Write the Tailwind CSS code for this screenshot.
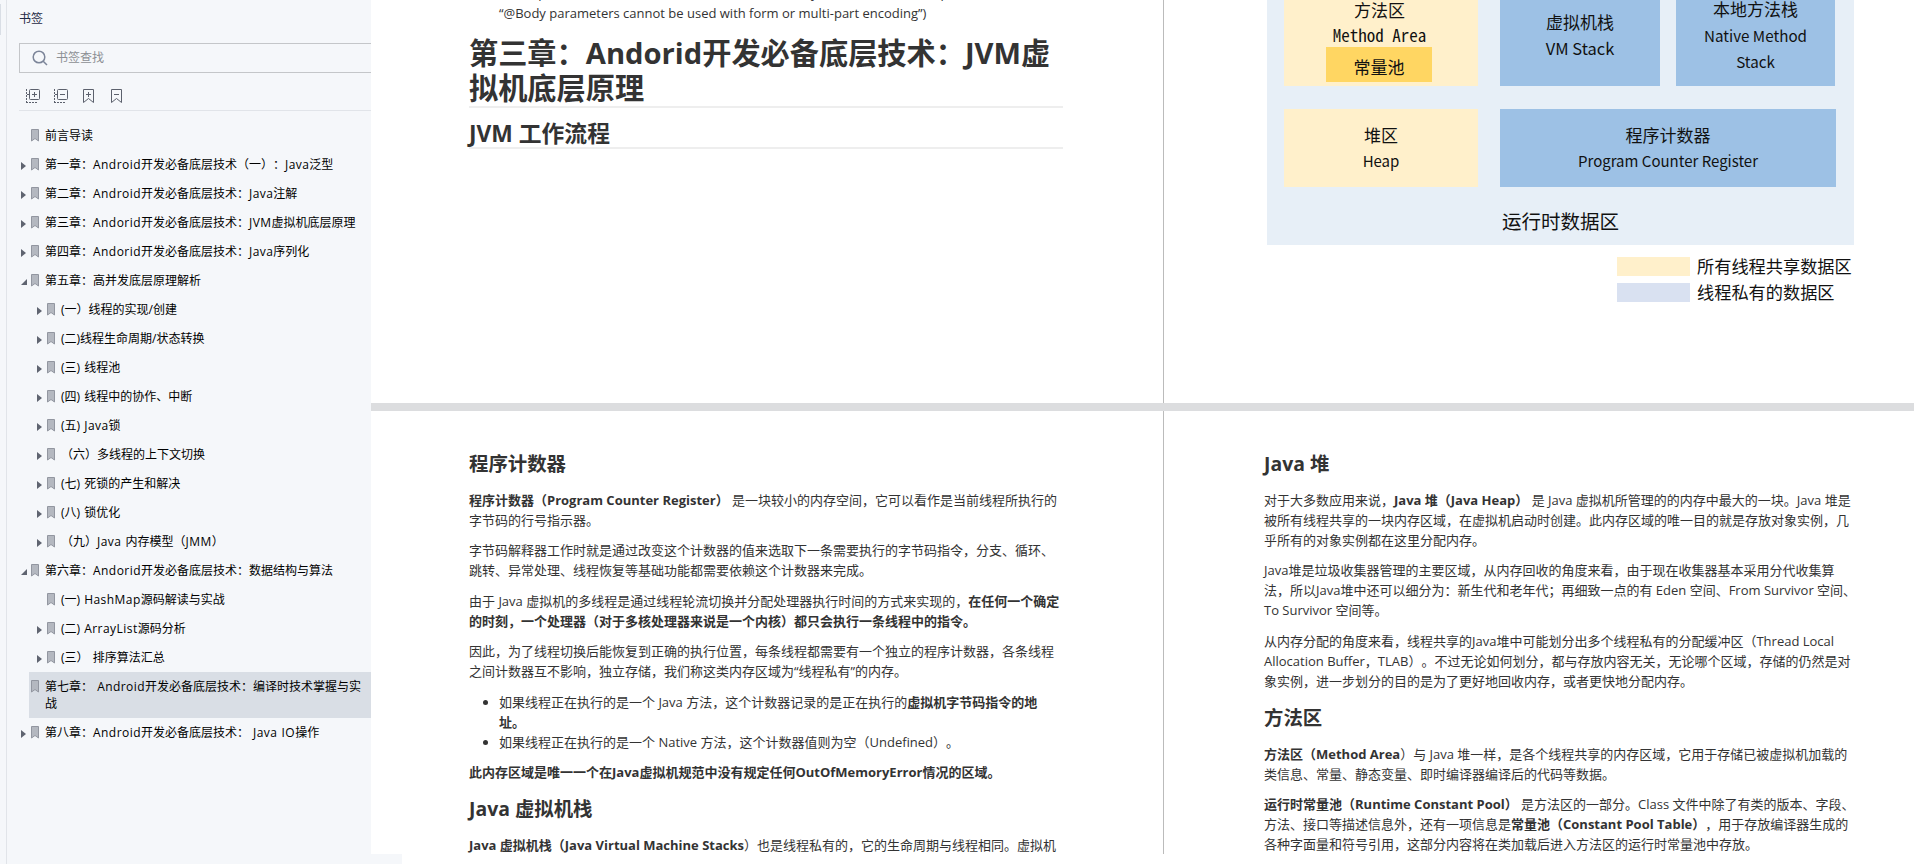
<!DOCTYPE html>
<html lang="zh-CN">
<head>
  <meta charset="UTF-8" />
  <meta name="viewport" content="width=device-width, initial-scale=1.0" />
  <title>Android开发必备底层技术</title>
  <script src="https://cdn.jsdelivr.net/npm/@tailwindcss/browser@4"></script>
</head>
<body class="h-[864px] overflow-hidden bg-white font-['Open_Sans','Noto_Sans_CJK_SC',sans-serif] [text-spacing-trim:space-all]">

  <!-- Icons -->
  <svg class="hidden">
    <symbol id="mark" viewBox="0 0 8 13"><path d="M.5 .5h7v11.500L4 9.500.5 12z" fill="#b4b8c0" stroke="#9296a0" /></symbol>
    <symbol id="closed" viewBox="0 0 5 8"><path d="M0 0 5 4 0 8z" fill="#5f6470" /></symbol>
    <symbol id="open" viewBox="0 0 6 6"><path d="M6 0v6H0z" fill="#5f6470" /></symbol>
  </svg>

  <div class="flex h-[854px]">
    <!-- Bookmarks panel -->
    <aside class="flex h-[864px] w-[371px] shrink-0 bg-[#f5f7fa]">
      <div class="w-[7px] shrink-0 border-r border-[#e1e4e9] pt-1"><div class="h-[31px] w-px bg-[#d9dee5]"></div></div>
      <div class="flex-1 pl-3 text-xs text-black">
        <h2 class="pt-[10px] leading-[18px] text-[#1f2a44]">书签</h2>
        <div class="mt-[15px] flex h-[30px] items-center border border-r-0 border-[#c4c6c9] pl-3 text-[#8c8f94]">
          <svg class="mr-2 size-4" viewBox="0 0 16 16" fill="none" stroke="#7c8599" stroke-width="1.5"><circle cx="7" cy="7" r="5.8" /><path d="m11.2 11.2 3.8 3.800" /></svg>
          书签查找
        </div>
        <div class="flex h-[38px] items-center gap-[13px] border-b border-[#e1e4e9] pt-[15px] pb-[7px] pl-[6px]">
          <svg class="size-[15px]" viewBox="0 0 15 15" fill="none" stroke="#5c616d"><rect x="4.5" y="1.5" width="10" height="10" rx="1" /><path d="M7 6.500h5M9.500 4v5M2 6.500h2" /><path d="M1.500 1v14M1 14.500h11" stroke-dasharray="2 1" /></svg>
          <svg class="size-[15px]" viewBox="0 0 15 15" fill="none" stroke="#5c616d"><rect x="4.5" y="1.5" width="10" height="10" rx="1" /><path d="M7 6.500h5M2 6.500h2" /><path d="M1.500 1v14M1 14.500h11" stroke-dasharray="2 1" /></svg>
          <svg class="size-[15px]" viewBox="0 0 15 15" fill="none" stroke="#5c616d"><path d="M2.500 1.500h10V14.500L7.500 10.500 2.500 14.500zM5 6.500h5M7.500 4v5" /></svg>
          <svg class="size-[15px]" viewBox="0 0 15 15" fill="none" stroke="#5c616d"><path d="M2.500 1.500h10V14.500L7.500 10.500 2.500 14.500zM5 6.500h5" /></svg>
        </div>
        <ul id="tree" class="pt-[10px] whitespace-pre [word-spacing:1px]"></ul>
      </div>
    </aside>

    <!-- Document, two pages side by side -->
    <main class="grid h-[854px] w-[1543px] grid-cols-[792px_1fr] grid-rows-[403px_443px] gap-y-2 overflow-hidden bg-[#dcdddf] text-[13px] leading-5 text-[#333]">
      <section class="overflow-hidden bg-white pl-[98px]">
        <div class="-mt-[17px] pl-[30px] whitespace-nowrap">throw parameterError(method, i, annotation of body, for a form or multi-part method<br />“@Body parameters cannot be used with form or multi-part encoding”)</div>
        <h1 class="mt-[13px] w-[594px] border-b-2 border-[#eee] text-[29.2px] leading-[35px] font-bold whitespace-nowrap">第三章：Andorid开发必备底层技术：JVM虚<br />拟机底层原理</h1>
        <h2 class="mt-[12px] w-[594px] border-b-2 border-[#eee] text-[22.8px] leading-[27px] font-bold">JVM 工作流程</h2>
      </section>

      <section class="overflow-hidden border-l border-[#bbb] bg-white pl-[103px]">
        <div class="h-[245px] w-[587px] bg-[#e7eff7] px-[17px] font-['Noto_Sans_CJK_SC',sans-serif] text-[17px] leading-[26px] text-[#111]">
          <div class="flex h-[86px] text-center">
            <div class="w-[194px] bg-[#fff0cb]">
              <div class="-mt-[3px] pr-[3px]">方法区</div>
              <div class="pr-[3px] font-['Noto_Sans_Mono_CJK_SC','Noto_Sans_CJK_SC',monospace] leading-6">Method Area</div>
              <div class="ml-[42px] h-[35px] w-[106px] bg-[#ffd662] leading-[40px]">常量池</div>
            </div>
            <div class="ml-[22px] w-[160px] bg-[#9dc1e5] pt-[9px]">虚拟机栈<div class="text-[16.5px]">VM Stack</div></div>
            <div class="ml-4 w-[159px] bg-[#9dc1e5]"><div class="-mt-[4px]">本地方法栈<div class="text-[15.2px]">Native Method<br />Stack</div></div></div>
          </div>
          <div class="mt-[23px] flex h-[78px] text-center">
            <div class="w-[194px] bg-[#fff0cb] pt-[13px]">堆区<div class="text-[15px]">Heap</div></div>
            <div class="ml-[22px] w-[336px] bg-[#9dc1e5] pt-[13px]">程序计数器<div class="text-[15px]">Program Counter Register</div></div>
          </div>
          <div class="pt-[21px] text-center text-[19.5px]">运行时数据区</div>
        </div>
        <div class="w-[587px] pt-[8px] pl-[350px] font-['Noto_Sans_CJK_SC',sans-serif] text-[17.2px] leading-[26px] text-[#111]">
          <div class="flex items-center gap-[7px] whitespace-nowrap"><span class="h-[19px] w-[73px] bg-[#fff0cb]"></span>所有线程共享数据区</div>
          <div class="flex items-center gap-[7px] whitespace-nowrap"><span class="h-[19px] w-[73px] bg-[#d9e1f1]"></span>线程私有的数据区</div>
        </div>
      </section>

      <section class="overflow-hidden bg-white pt-[39px] pl-[98px] whitespace-nowrap">
        <h3 class="text-[19.4px] leading-[27px] font-bold">程序计数器</h3>
        <p class="mt-[12.5px]"><b>程序计数器（Program Counter Register）</b> 是一块较小的内存空间，它可以看作是当前线程所执行的<br />字节码的行号指示器。</p>
        <p class="mt-[10.5px]">字节码解释器工作时就是通过改变这个计数器的值来选取下一条需要执行的字节码指令，分支、循环、<br />跳转、异常处理、线程恢复等基础功能都需要依赖这个计数器来完成。</p>
        <p class="mt-[10.5px]">由于 Java 虚拟机的多线程是通过线程轮流切换并分配处理器执行时间的方式来实现的，<b>在任何一个确定<br />的时刻，一个处理器（对于多核处理器来说是一个内核）都只会执行一条线程中的指令。</b></p>
        <p class="mt-[10.5px]">因此，为了线程切换后能恢复到正确的执行位置，每条线程都需要有一个独立的程序计数器，各条线程<br />之间计数器互不影响，独立存储，我们称这类内存区域为“线程私有”的内存。</p>
        <ul class="mt-[10.5px] list-disc pl-[30px]">
          <li>如果线程正在执行的是一个 Java 方法，这个计数器记录的是正在执行的<b>虚拟机字节码指令的地<br />址。</b></li>
          <li>如果线程正在执行的是一个 Native 方法，这个计数器值则为空（Undefined）。</li>
        </ul>
        <p class="mt-[10px]"><b>此内存区域是唯一一个在Java虚拟机规范中没有规定任何OutOfMemoryError情况的区域。</b></p>
        <h3 class="mt-[13px] text-[19.4px] leading-[27px] font-bold">Java 虚拟机栈</h3>
        <p class="mt-[13px]"><b>Java 虚拟机栈（Java Virtual Machine Stacks</b>）也是线程私有的，它的生命周期与线程相同。虚拟机</p>
      </section>

      <section class="overflow-hidden border-l border-[#bbb] bg-white pt-[39px] pl-[100px] whitespace-nowrap">
        <h3 class="text-[19.4px] leading-[27px] font-bold">Java 堆</h3>
        <p class="mt-[12.5px]">对于大多数应用来说，<b>Java 堆（Java Heap）</b> 是 Java 虚拟机所管理的的内存中最大的一块。Java 堆是<br />被所有线程共享的一块内存区域，在虚拟机启动时创建。此内存区域的唯一目的就是存放对象实例，几<br />乎所有的对象实例都在这里分配内存。</p>
        <p class="mt-[10.5px]">Java堆是垃圾收集器管理的主要区域，从内存回收的角度来看，由于现在收集器基本采用分代收集算<br />法，所以Java堆中还可以细分为：新生代和老年代；再细致一点的有 Eden 空间、From Survivor 空间、<br />To Survivor 空间等。</p>
        <p class="mt-[10.5px]">从内存分配的角度来看，线程共享的Java堆中可能划分出多个线程私有的分配缓冲区（Thread Local<br />Allocation Buffer，TLAB）。不过无论如何划分，都与存放内容无关，无论哪个区域，存储的仍然是对<br />象实例，进一步划分的目的是为了更好地回收内存，或者更快地分配内存。</p>
        <h3 class="mt-[13.5px] text-[19.4px] leading-[27px] font-bold">方法区</h3>
        <p class="mt-[12.5px]"><b>方法区（Method Area</b>）与 Java 堆一样，是各个线程共享的内存区域，它用于存储已被虚拟机加载的<br />类信息、常量、静态变量、即时编译器编译后的代码等数据。</p>
        <p class="mt-[10.5px]"><b>运行时常量池（Runtime Constant Pool）</b> 是方法区的一部分。Class 文件中除了有类的版本、字段、<br />方法、接口等描述信息外，还有一项信息是<b>常量池（Constant Pool Table）</b>，用于存放编译器生成的<br />各种字面量和符号引用，这部分内容将在类加载后进入方法区的运行时常量池中存放。</p>
      </section>
    </main>
  </div>
  <div class="h-[10px] w-[402px] bg-[#f5f7fa]"></div>

  <script>
    // [level, arrow, title]
    const items = [
      [0, "", "前言导读"],
      [0, "closed", "第一章：Android开发必备底层技术（一）：Java泛型"],
      [0, "closed", "第二章：Android开发必备底层技术：Java注解"],
      [0, "closed", "第三章：Andorid开发必备底层技术：JVM虚拟机底层原理"],
      [0, "closed", "第四章：Andorid开发必备底层技术：Java序列化"],
      [0, "open", "第五章：高并发底层原理解析"],
      [1, "closed", "(一）线程的实现/创建"],
      [1, "closed", "(二)线程生命周期/状态转换"],
      [1, "closed", "(三) 线程池"],
      [1, "closed", "(四) 线程中的协作、中断"],
      [1, "closed", "(五) Java锁"],
      [1, "closed", "（六）多线程的上下文切换"],
      [1, "closed", "(七) 死锁的产生和解决"],
      [1, "closed", "(八) 锁优化"],
      [1, "closed", "（九）Java 内存模型（JMM）"],
      [0, "open", "第六章：Andorid开发必备底层技术：数据结构与算法"],
      [1, "", "(一) HashMap源码解读与实战"],
      [1, "closed", "(二) ArrayList源码分析"],
      [1, "closed", "(三） 排序算法汇总"],
      [0, "selected", "第七章： Android开发必备底层技术：编译时技术掌握与实\n战"],
      [0, "closed", "第八章：Android开发必备底层技术： Java IO操作"],
    ];
    const latin = (title) => title.replace(/[A-Za-z]+/g, '<span class="tracking-[0.45px]">$&</span>');
    document.getElementById("tree").innerHTML = items.map(([level, arrow, title]) =>
      `<li class="${level ? "ml-[16px]" : ""} flex"><span class="w-[10px] shrink-0 pt-[12px] pl-[2px]">${
        arrow === "closed" ? '<svg class="h-2 w-[5px]"><use href="#closed" /></svg>' :
        arrow === "open" ? '<svg class="mt-px size-[6px]"><use href="#open" /></svg>' : ""
      }</span><div class="flex flex-1 pl-[2px] ${arrow === "selected" ? "h-[46px] bg-[#d9dee5]" : "h-[29px]"}"><svg class="mt-[8px] mr-[6px] h-[13px] w-2 shrink-0"><use href="#mark" /></svg><span class="pt-[6px] leading-[17px]">${latin(title)}</span></div></li>`
    ).join("");
  </script>
</body>
</html>
